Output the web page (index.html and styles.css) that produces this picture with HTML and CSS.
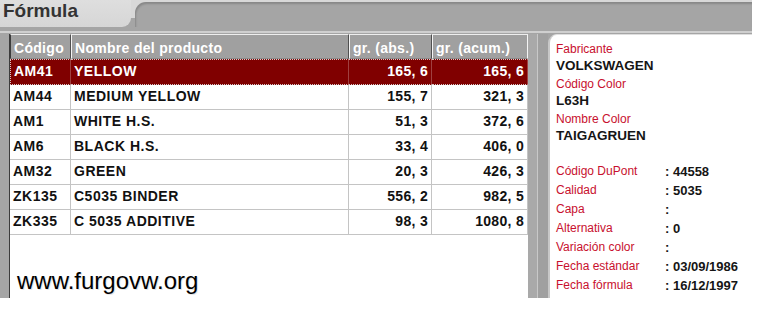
FILE: index.html
```html
<!DOCTYPE html>
<html lang="es">
<head>
<meta charset="utf-8">
<title>Fórmula</title>
<link rel="stylesheet" href="styles.css">
</head>
<body>
<div class="app">
  <div class="topbar">
    <div class="tabwrap"><div class="tab">Fórmula</div></div>
    <div class="band"></div>
  </div>
  <div class="sep"></div>
  <div class="main">
    <div class="gutter"></div>
    <div class="grid-box">
      <table class="grid">
        <thead>
          <tr>
            <th class="c1">Código</th>
            <th class="c2">Nombre del producto</th>
            <th class="c3">gr. (abs.)</th>
            <th class="c4">gr. (acum.)</th>
          </tr>
        </thead>
        <tbody>
          <tr class="sel"><td>AM41</td><td>YELLOW</td><td class="num">165, 6</td><td class="num">165, 6</td></tr>
          <tr><td>AM44</td><td>MEDIUM YELLOW</td><td class="num">155, 7</td><td class="num">321, 3</td></tr>
          <tr><td>AM1</td><td>WHITE H.S.</td><td class="num">51, 3</td><td class="num">372, 6</td></tr>
          <tr><td>AM6</td><td>BLACK H.S.</td><td class="num">33, 4</td><td class="num">406, 0</td></tr>
          <tr><td>AM32</td><td>GREEN</td><td class="num">20, 3</td><td class="num">426, 3</td></tr>
          <tr><td>ZK135</td><td>C5035 BINDER</td><td class="num">556, 2</td><td class="num">982, 5</td></tr>
          <tr><td>ZK335</td><td>C 5035 ADDITIVE</td><td class="num">98, 3</td><td class="num">1080, 8</td></tr>
        </tbody>
      </table>
      <div class="watermark">www.furgovw.org</div>
    </div>
    <div class="divider"><div class="d1"></div><div class="d2"></div><div class="d3"></div></div>
    <div class="panel">
      <div class="info">
        <div class="lbl">Fabricante</div>
        <div class="val">VOLKSWAGEN</div>
        <div class="lbl">Código Color</div>
        <div class="val">L63H</div>
        <div class="lbl">Nombre Color</div>
        <div class="val">TAIGAGRUEN</div>
      </div>
      <div class="props">
        <div class="k">Código DuPont</div><div class="v">: 44558</div>
        <div class="k">Calidad</div><div class="v">: 5035</div>
        <div class="k">Capa</div><div class="v">:</div>
        <div class="k">Alternativa</div><div class="v">: 0</div>
        <div class="k">Variación color</div><div class="v">:</div>
        <div class="k">Fecha estándar</div><div class="v">: 03/09/1986</div>
        <div class="k">Fecha fórmula</div><div class="v">: 16/12/1997</div>
      </div>
    </div>
  </div>
</div>
</body>
</html>
```
FILE: styles.css
```css
* { box-sizing: border-box; }

body {
  margin: 0;
  background: #ffffff;
  font-family: "Liberation Sans", Arial, sans-serif;
}

.app {
  width: 752px;
  height: 298px;
  background: #a5a5a5;
  display: flex;
  flex-direction: column;
}

/* ---------- top tab bar ---------- */
.topbar {
  height: 27px;
  display: flex;
  background: #d8d8d8;
}

.tabwrap {
  width: 135px;
  background: linear-gradient(to bottom, #d8d8d8 0 18px, #a5a5a5 18px);
}

.tab {
  width: 131px;
  height: 27px;
  background: linear-gradient(to bottom, #dedede, #d6d6d6);
  border-bottom-right-radius: 9px;
  padding-left: 3px;
  font-size: 19px;
  line-height: 22px;
  font-weight: bold;
  color: #333333;
}

.band {
  flex: 1;
  margin-top: 2px;
  background: #a5a5a5;
  border-top-left-radius: 11px;
  box-shadow: inset 1px 2px 2px rgba(0, 0, 0, 0.18);
}

.sep {
  height: 7px;
  background: linear-gradient(to bottom, #a5a5a5 0 4px, #cfcfcf 4px 6px, #a5a5a5 6px);
}

/* ---------- main area ---------- */
.main {
  flex: 1;
  display: flex;
  min-height: 0;
}

.gutter {
  width: 9px;
}

.grid-box {
  width: 519px;
  background: #ffffff;
  border-left: 1px solid #3c3c3c;
}

.grid {
  width: 518px;
  table-layout: fixed;
  border-collapse: separate;
  border-spacing: 0;
  font-size: 14px;
  font-weight: bold;
}

.grid th {
  background: #a0a0a0;
  color: #ffffff;
  text-align: left;
  padding: 3px 3px 0 3px;
  line-height: 20px;
  letter-spacing: 0.3px;
  border-top: 1px solid #eeeeee;
  border-left: 1px solid #f4f4f4;
  border-right: 1px solid #505050;
  border-bottom: 1px solid #8a8a8a;
  white-space: nowrap;
  overflow: hidden;
}

.grid th.c1 { width: 61px; border-left-color: #3c3c3c; }
.grid th.c2 { width: 278px; }
.grid th.c3 { width: 83px; }
.grid th.c4 { width: 96px; border-right-color: #f4f4f4; }

.grid td {
  color: #111111;
  padding: 0 3px 1px 3px;
  line-height: 23px;
  letter-spacing: 0.5px;
  border-right: 1px solid #c4c4c4;
  border-bottom: 1px solid #c4c4c4;
  white-space: nowrap;
  overflow: hidden;
}

.grid td.num {
  text-align: right;
  padding-right: 3px;
  letter-spacing: 0.3px;
}

.grid tr.sel td {
  background: #800000;
  color: #ffffff;
  border-top: 1px dotted #d8c8c8;
  border-bottom: 1px dotted #d8c8c8;
  border-right-color: #a04040;
}

.grid tr.sel td:first-child {
  border-left: 1px dotted #d8c8c8;
}

.watermark {
  margin-top: 32px;
  padding-left: 7px;
  font-size: 24px;
  line-height: 28px;
  letter-spacing: 0;
  color: #000000;
  text-shadow: 1px 1px 0 #e6e6e6;
}

/* ---------- divider between grid and panel ---------- */
.divider {
  width: 20px;
  display: flex;
}

.divider .d1 { width: 9px; background: #a9a9a9; }
.divider .d2 { width: 1px; background: #c8c8c8; }
.divider .d3 { width: 10px; background: #a0a0a0; }

/* ---------- right info panel ---------- */
.panel {
  flex: 1;
  background: #ffffff;
  border-top-left-radius: 9px;
  border-top: 1px solid #dedede;
  border-left: 2px solid #c8c8c8;
  padding: 6px 0 0 6px;
}

.info .lbl {
  color: #c8102e;
  font-size: 12px;
  line-height: 17px;
}

.info .val {
  color: #151515;
  font-size: 13.5px;
  font-weight: bold;
  line-height: 16px;
  margin-bottom: 2px;
}

.props {
  margin-top: 18px;
  display: grid;
  grid-template-columns: 109px 1fr;
  line-height: 19px;
}

.props .k {
  color: #c8102e;
  font-size: 12px;
  white-space: nowrap;
}

.props .v {
  color: #151515;
  font-size: 13px;
  font-weight: bold;
}
```
